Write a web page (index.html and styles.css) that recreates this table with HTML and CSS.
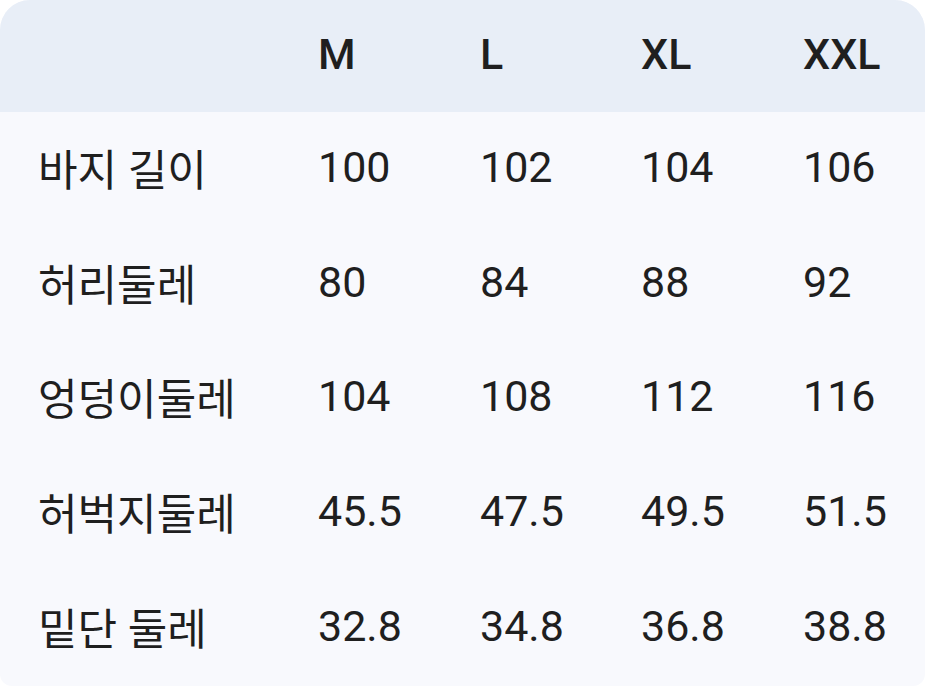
FILE: index.html
```html
<!DOCTYPE html>
<html lang="ko">
<head>
<meta charset="utf-8">
<link rel="stylesheet" href="styles.css">
</head>
<body>
<div class="card">
  <div class="row head">
    <div class="cell"></div><div class="cell">M</div><div class="cell">L</div><div class="cell">XL</div><div class="cell">XXL</div>
  </div>
  <div class="row">
    <div class="cell">바지 길이</div><div class="cell">100</div><div class="cell">102</div><div class="cell">104</div><div class="cell">106</div>
  </div>
  <div class="row">
    <div class="cell">허리둘레</div><div class="cell">80</div><div class="cell">84</div><div class="cell">88</div><div class="cell">92</div>
  </div>
  <div class="row">
    <div class="cell">엉덩이둘레</div><div class="cell">104</div><div class="cell">108</div><div class="cell">112</div><div class="cell">116</div>
  </div>
  <div class="row">
    <div class="cell">허벅지둘레</div><div class="cell">45.5</div><div class="cell">47.5</div><div class="cell">49.5</div><div class="cell">51.5</div>
  </div>
  <div class="row">
    <div class="cell">밑단 둘레</div><div class="cell">32.8</div><div class="cell">34.8</div><div class="cell">36.8</div><div class="cell">38.8</div>
  </div>
</div>
</body>
</html>
```

FILE: styles.css
```css
html, body {
  margin: 0;
  padding: 0;
  background: #ffffff;
}
.card {
  width: 925px;
  height: 686px;
  border-radius: 30px 30px 12px 12px;
  overflow: hidden;
  background: #f8f9fd;
  display: grid;
  grid-template-rows: 112px repeat(5, 1fr);
  font-family: Roboto, "Noto Sans CJK KR", sans-serif;
  color: #1f1f1f;
}
.row {
  display: grid;
  grid-template-columns: 280px 162px 161px 162px 160px;
  align-items: center;
  padding-bottom: 5px;
}
.cell {
  padding-left: 38px;
  font-size: 43px;
  white-space: nowrap;
}
.head {
  background: #e8eef7;
}
.head .cell {
  font-weight: 500;
  font-size: 43px;
}
```
